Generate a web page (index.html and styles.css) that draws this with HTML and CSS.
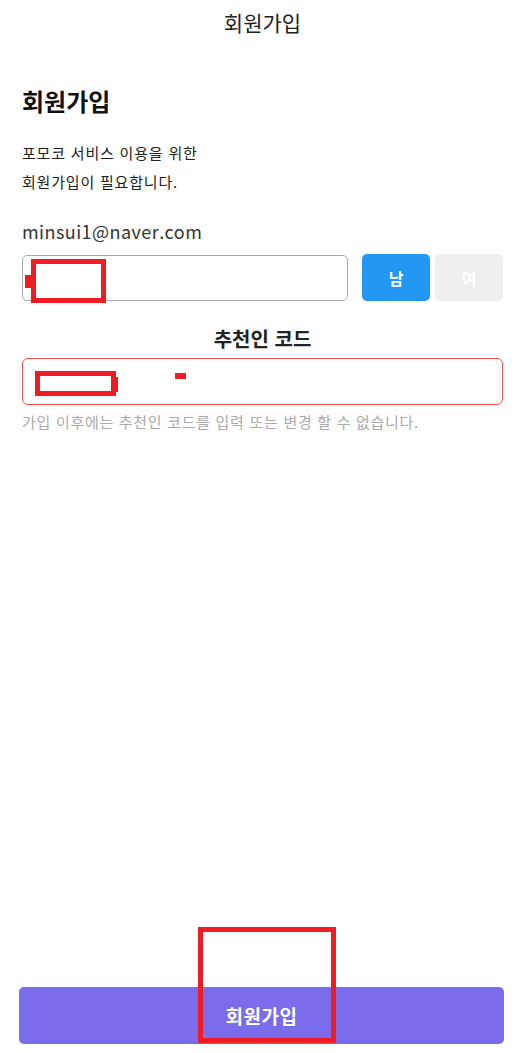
FILE: index.html
```html
<!DOCTYPE html>
<html lang="ko">
<head>
<meta charset="utf-8">
<title>회원가입</title>
<link rel="stylesheet" href="styles.css">
</head>
<body>
<div class="page">
  <header class="topbar">회원가입</header>
  <main class="content">
    <h1 class="title">회원가입</h1>
    <p class="desc">포모코 서비스 이용을 위한<br>회원가입이 필요합니다.</p>
    <div class="email">minsui1@naver.com</div>
    <div class="row">
      <div class="name-input"></div>
      <button class="gender gender-on">남</button>
      <button class="gender gender-off">여</button>
    </div>
    <h2 class="code-label">추천인 코드</h2>
    <div class="code-input"></div>
    <p class="hint">가입 이후에는 추천인 코드를 입력 또는 변경 할 수 없습니다.</p>
  </main>
  <div class="spacer"></div>
  <footer class="bottom">
    <button class="submit">회원가입</button>
  </footer>

  <div class="mark mark-name"></div>
  <div class="mark-tab mark-name-tab"></div>
  <div class="mark mark-code"></div>
  <div class="mark-tab mark-code-tab"></div>
  <div class="mark-dot"></div>
  <div class="mark mark-submit"></div>
</div>
</body>
</html>
```

FILE: styles.css
```css
* { box-sizing: border-box; }
html, body { margin: 0; padding: 0; background: #fff; }
body {
  font-family: "Noto Sans CJK KR", "Noto Sans", sans-serif;
  color: #222;
}
.page {
  position: relative;
  min-height: 1053px;
  display: flex;
  flex-direction: column;
}
.topbar {
  height: 44px;
  line-height: 44px;
  text-align: center;
  font-size: 21px;
  color: #222;
}
.content {
  padding: 0 22px;
}
.title {
  margin: 40px 0 0;
  font-size: 24px;
  line-height: 34px;
  font-weight: 700;
  color: #111;
}
.desc {
  margin: 20px 0 0;
  font-size: 15px;
  letter-spacing: 0.8px;
  line-height: 29px;
  color: #222;
}
.email {
  margin-top: 23px;
  font-size: 18px;
  letter-spacing: 0.45px;
  line-height: 24px;
  color: #333;
}
.row {
  margin-top: 11px;
  display: flex;
  align-items: center;
  height: 47px;
}
.name-input {
  width: 327px;
  height: 46px;
  border: 1px solid #aaa;
  border-radius: 5px;
}
.gender {
  height: 47px;
  width: 68px;
  border: none;
  border-radius: 5px;
  font-family: inherit;
  font-size: 16px;
  font-weight: 700;
  color: #fff;
  padding: 0;
}
.gender-on { background: #2196f3; margin-left: 14px; }
.gender-off { background: #eeeeee; margin-left: 5px; }
.code-label {
  margin: 26px 0 0;
  text-align: center;
  font-size: 20px;
  line-height: 24px;
  font-weight: 700;
  color: #222;
}
.code-input {
  margin-top: 7px;
  height: 47px;
  border: 1px solid #f4514f;
  border-radius: 6px;
}
.hint {
  margin: 6px 0 0;
  font-size: 15px;
  letter-spacing: 0.7px;
  line-height: 22px;
  color: #aaa;
}
.spacer { flex: 1; }
.bottom {
  padding: 0 21px 9px 19px;
}
.submit {
  width: 100%;
  height: 57px;
  border: none;
  border-radius: 5px;
  background: #7a6cea;
  color: #fff;
  font-family: inherit;
  font-size: 19px;
  letter-spacing: 0.5px;
  font-weight: 700;
  padding: 0;
}

/* red redaction marks over content */
.mark {
  position: absolute;
  border: 5px solid #ee1c25;
}
.mark-tab, .mark-dot {
  position: absolute;
  background: #ee1c25;
}
.mark-name { left: 31px; top: 259px; width: 75px; height: 44px; }
.mark-name-tab { left: 25px; top: 275px; width: 6px; height: 13px; }
.mark-code { left: 35px; top: 371px; width: 81px; height: 25px; }
.mark-code-tab { left: 116px; top: 377px; width: 2px; height: 15px; }
.mark-dot { left: 175px; top: 373px; width: 11px; height: 6px; }
.mark-submit { left: 198px; top: 927px; width: 138px; height: 116px; }
```
